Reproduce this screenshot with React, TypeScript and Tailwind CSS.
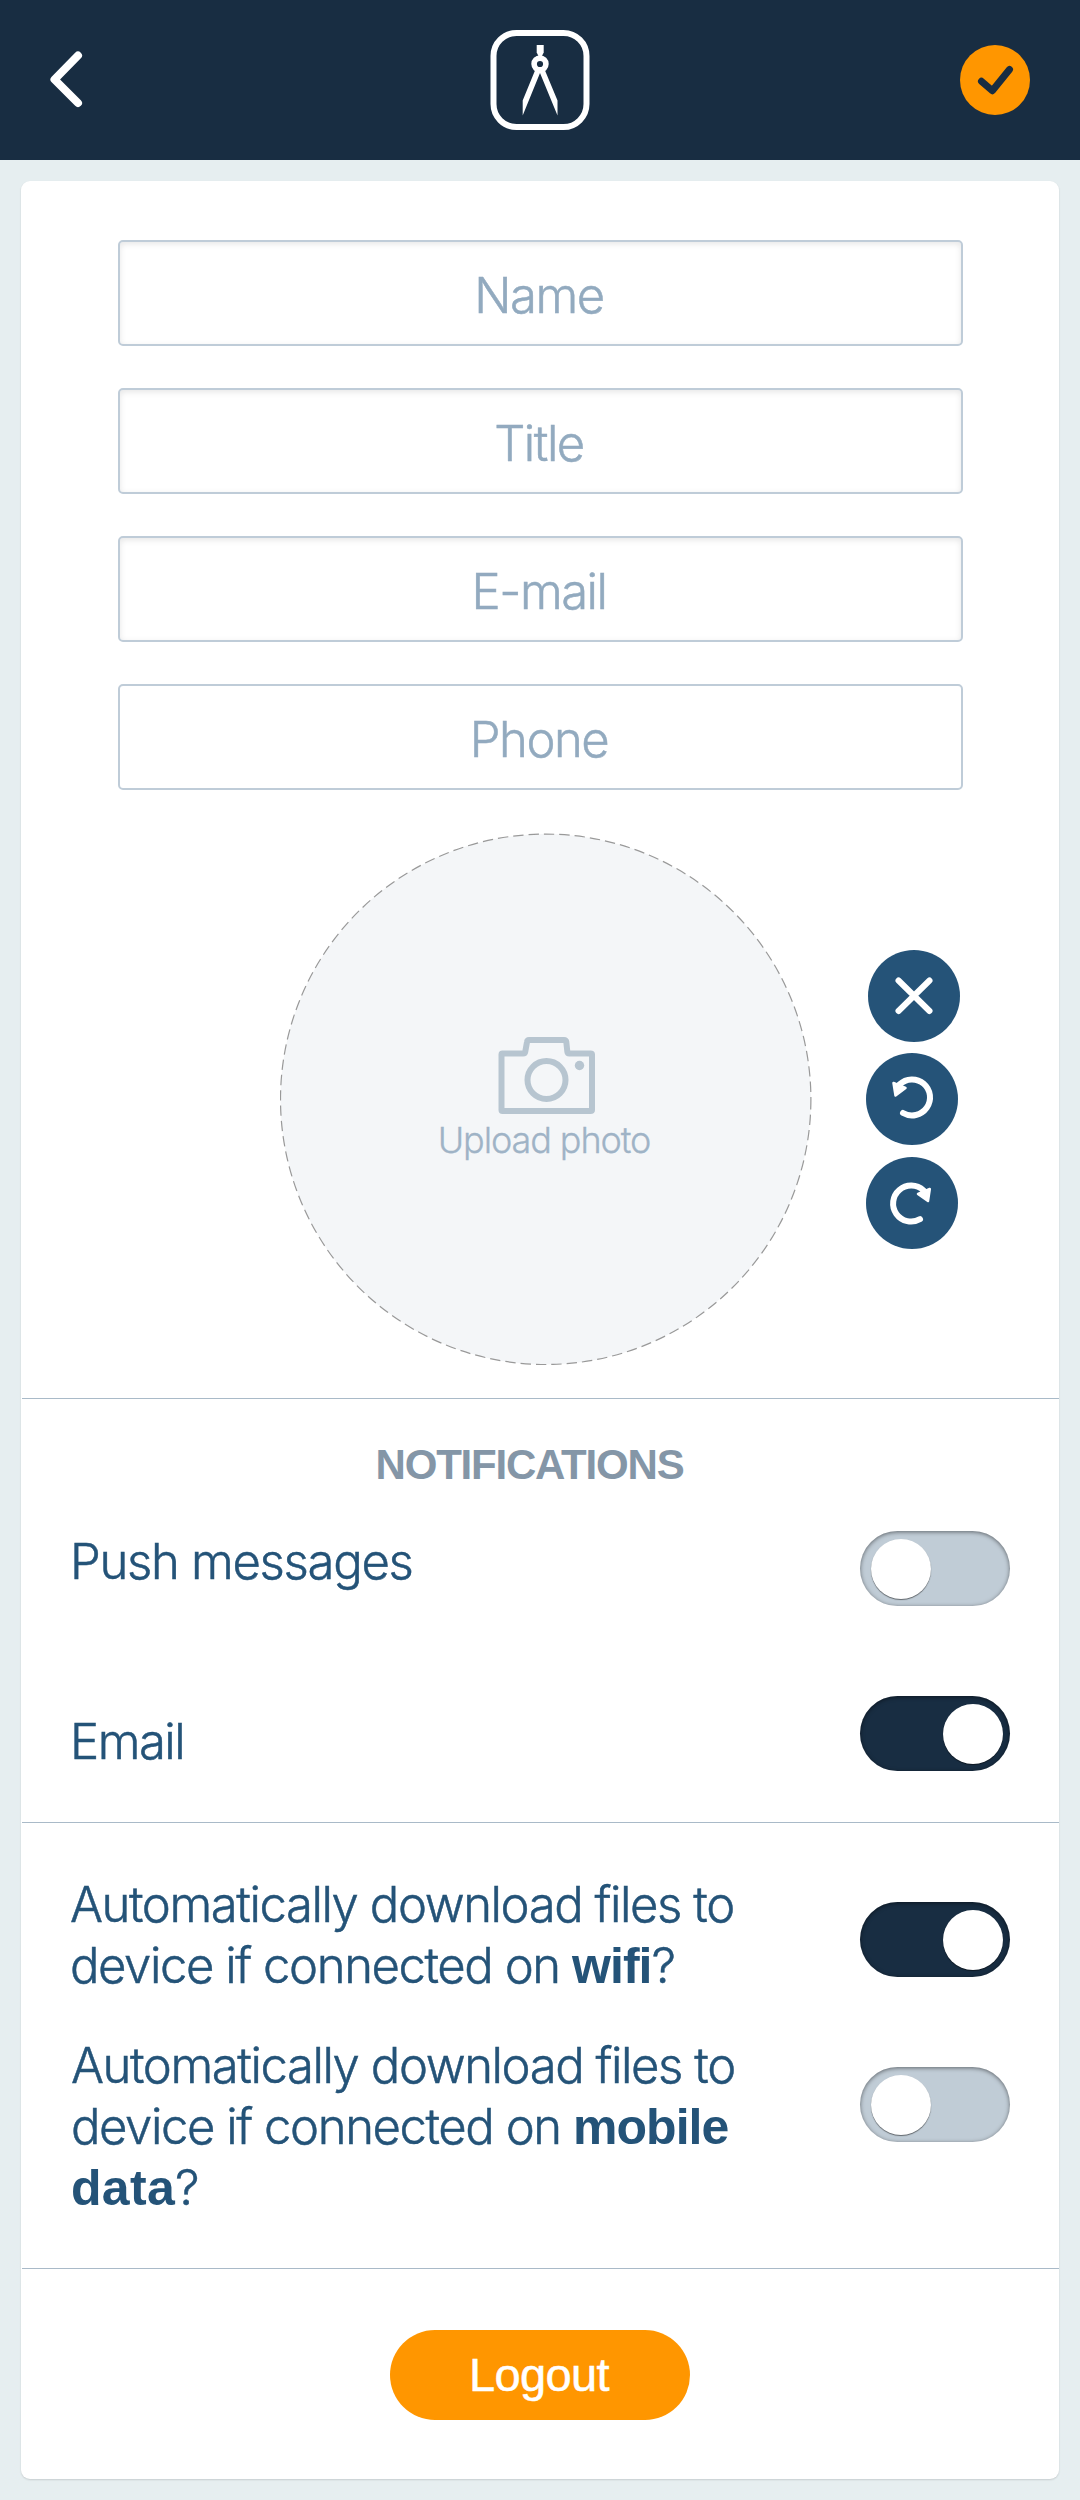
import type { ReactNode } from "react";

const fields = ["Name", "Title", "E-mail", "Phone"];

function Toggle({ on = false, className = "" }: { on?: boolean; className?: string }) {
  return (
    <button
      role="switch"
      aria-checked={on}
      className={`flex h-[75px] w-[150px] shrink-0 items-center rounded-full shadow-[inset_0_1px_4px_rgba(0,0,0,0.5)] ${
        on ? "justify-end bg-[#182d42] pr-[7px]" : "justify-start bg-[#c0ccd6] pl-[11px]"
      } ${className}`}
    >
      <span className="size-[60px] rounded-full bg-white shadow-[0_1px_1px_rgba(0,0,0,0.5)]" />
    </button>
  );
}

function RoundButton({ label, className = "", children }: { label: string; className?: string; children: ReactNode }) {
  return (
    <button aria-label={label} className={`size-[92px] rounded-full bg-[#255378] ${className}`}>
      <svg viewBox="0 0 92 92" className="size-full" fill="none" stroke="#fff" strokeWidth="6" strokeLinecap="round" strokeLinejoin="round">
        {children}
      </svg>
    </button>
  );
}

function Header() {
  return (
    <header className="flex h-40 items-center justify-between bg-[#182d42] pr-[50px] pl-[50px]">
      <button aria-label="Back" className="w-[70px]">
        <svg width="34" height="58" viewBox="0 0 34 58" fill="none" stroke="#fff" strokeWidth="8" strokeLinecap="round" strokeLinejoin="round">
          <path d="M28 4.500 L4.500 28.500 L28 52" />
        </svg>
      </button>
      <svg width="100" height="100" viewBox="0 0 100 100" fill="none">
        <rect x="3.500" y="3" width="93" height="94" rx="23" stroke="#fff" strokeWidth="6" />
        <path d="M46.700 15h7v7.500l-2 4h-3l-2-4z" fill="#fff" />
        <circle cx="50" cy="34" r="5.900" stroke="#fff" strokeWidth="5.600" />
        <path d="M45 40.500L32.700 70.500V85.500L50 43L67.500 85.500V70.500L55 40.500L50 42z" fill="#fff" />
      </svg>
      <button aria-label="Save" className="size-[70px] rounded-full bg-[#ff9600]">
        <svg viewBox="0 0 70 70" className="size-full" fill="none" stroke="#182d42" strokeWidth="7" strokeLinecap="round" strokeLinejoin="round">
          <path d="M21.500 36.300L32.300 45.700L49.500 24.500" />
        </svg>
      </button>
    </header>
  );
}

function PhotoUpload() {
  return (
    <div className="mt-[43px] ml-[259px] flex items-center">
      <div className="relative flex size-[532px] flex-col items-center">
        <svg viewBox="0 0 532 532" className="absolute inset-0 size-full">
          <circle cx="265.700" cy="266.300" r="265.200" fill="#f4f6f8" stroke="#999" strokeWidth="1.200" strokeDasharray="10.400 5" />
        </svg>
        <svg width="98" height="78" viewBox="0 0 98 78" fill="none" stroke="#b7c5d0" strokeWidth="6" strokeLinejoin="round" className="relative mt-[204px] ml-[2px]">
          <path d="M3.500 17.500q0-1 1-1H25q2 0 2.300-2L29 5q.300-2 2-2H66q2 0 2.300 2L69.300 14.500q.300 2 2 2H92.500q1.500 0 1.500 1V73q0 1-1.500 1H4.500q-1 0-1-1z" />
          <circle cx="48.500" cy="43" r="19" />
          <circle cx="81.500" cy="28.500" r="4.700" fill="#b7c5d0" stroke="none" />
        </svg>
        <span className="relative mt-[2px] mr-1 font-['Inter',sans-serif] text-[36px] leading-[46px] font-light tracking-[-1.1px] text-[#9fb3c6] [-webkit-text-stroke:0.3px_currentColor]">
          Upload photo
        </span>
      </div>
      <div className="ml-[54px] flex flex-col gap-[11.5px]">
        <RoundButton label="Remove photo" className="ml-[2px]">
          <path d="M30.500 30.500L61.500 61M61.500 30.500L30.500 61" />
        </RoundButton>
        <RoundButton label="Rotate left">
          <path d="M33.500 31.500A18 18 0 1 1 37 60" />
          <path d="M27.500 30L39.500 35L29.500 42.500z" fill="#fff" strokeWidth="2.500" />
        </RoundButton>
        <RoundButton label="Rotate right">
          <path d="M57.500 33.500A18 18 0 1 0 54 62.200" />
          <path d="M63.800 32L52 37L62 44z" fill="#fff" strokeWidth="2.500" />
        </RoundButton>
      </div>
    </div>
  );
}

const label =
  "whitespace-nowrap font-['Inter',sans-serif] text-[49px] leading-[61px] font-light text-[#245378] [-webkit-text-stroke:0.5px_currentColor]";
const strong =
  "font-['Liberation_Sans',Arial,sans-serif] text-[50px] leading-none font-bold [-webkit-text-stroke:0px]";

export default function App() {
  return (
    <div className="h-[2500px] w-[1080px] bg-[#e6eef0]">
      <Header />
      <main className="mx-[21px] mt-[21px] h-[2298px] rounded-[9px] bg-white shadow-[0_1px_2px_rgba(0,0,0,0.14)]">
        <section className="h-[1217px] pt-[59px]">
          <div className="ml-[97px] flex w-[845px] flex-col gap-[42px]">
            {fields.map((name) => (
              <div
                key={name}
                className="flex h-[106px] items-center justify-center rounded-[5px] border-2 border-[#bfccd8] pt-1 pr-[3px] font-['Inter',sans-serif] text-[49px] leading-[61px] font-light tracking-[-1.5px] text-[#92aabf] shadow-[inset_0_2px_6px_rgba(0,0,0,0.1)] [-webkit-text-stroke:0.5px_currentColor] last:shadow-none"
              >
                {name}
              </div>
            ))}
          </div>
          <PhotoUpload />
        </section>

        <section className="ml-px h-[424px] border-t border-[#a9bac8] pt-[42px] pr-[49px] pl-12">
          <h2 className="mr-[-27px] ml-[-48px] text-center font-['Liberation_Sans',Arial,sans-serif] text-[42px] leading-[48px] font-bold tracking-[-1.2px] text-[#8496a7]">
            NOTIFICATIONS
          </h2>
          <div className="mt-[42px] flex items-start justify-between">
            <span className={`${label} tracking-[-1.3px]`}>Push messages</span>
            <Toggle />
          </div>
          <div className="mt-[90px] flex items-start justify-between">
            <span className={`${label} mt-[15px] tracking-[-1.5px]`}>Email</span>
            <Toggle on />
          </div>
        </section>

        <section className="ml-px h-[446px] border-t border-[#a9bac8] pt-[51px] pr-[49px] pl-12">
          <div className="flex items-start justify-between">
            <p className={`${label} tracking-[-1.42px]`}>
              Automatically download files to
              <br />
              device if connected on <b className={`${strong} tracking-[-1px]`}>wifi</b>?
            </p>
            <Toggle on className="mt-[28px]" />
          </div>
          <div className="mt-[39px] flex items-start justify-between pl-px">
            <p className={`${label} tracking-[-1.42px]`}>
              Automatically download files to
              <br />
              device if connected on <b className={`${strong} tracking-[-1px]`}>mobile</b>
              <br />
              <b className={`${strong} tracking-[0.3px]`}>data</b>?
            </p>
            <Toggle className="mt-[32px]" />
          </div>
        </section>

        <section className="ml-px flex justify-center border-t border-[#a9bac8] pt-[61px] pr-px">
          <button className="h-[90px] w-[300px] rounded-[45px] bg-[#ff9600] pr-[2px] font-['Liberation_Sans',Arial,sans-serif] text-[47px] leading-[60px] tracking-[-0.6px] text-white [-webkit-text-stroke:0.5px_white]">
            Logout
          </button>
        </section>
      </main>
    </div>
  );
}
